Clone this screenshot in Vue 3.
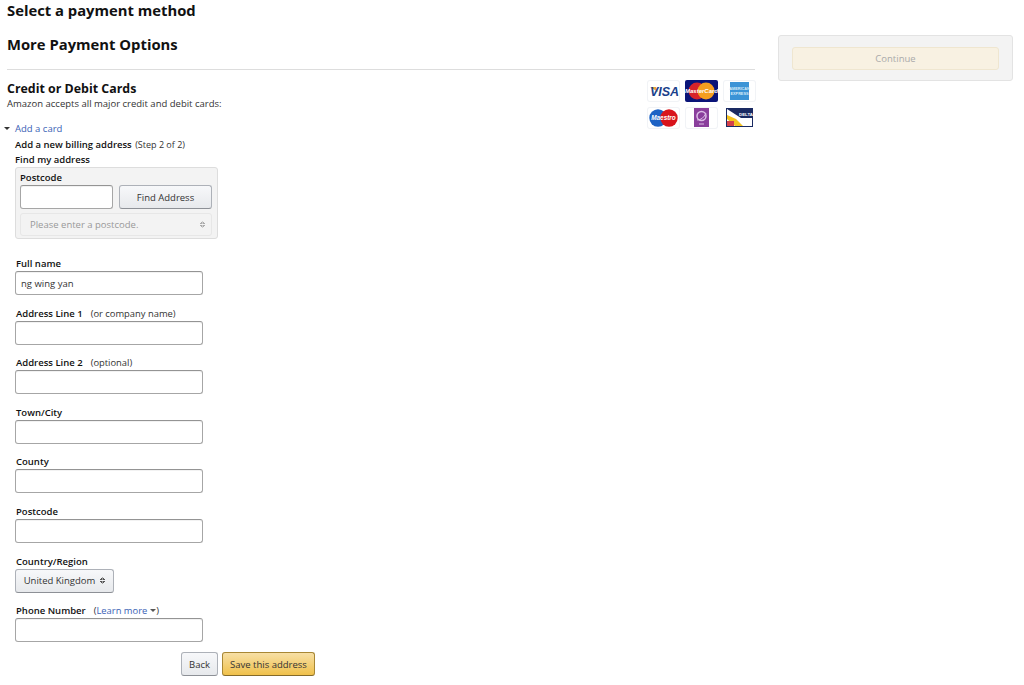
<script setup>
const fields = [
  { label: 'Address Line 1', note: '(or company name)' },
  { label: 'Address Line 2', note: '(optional)' },
  { label: 'Town/City' },
  { label: 'County' },
  { label: 'Postcode' }
]
</script>

<template>
  <div class="page">
    <main class="main">
      <h1 class="title">Select a payment method</h1>
      <h2 class="subtitle">More Payment Options</h2>
      <hr class="rule" />
      <section class="cards">
        <div class="cards-text">
          <h3 class="cards-title">Credit or Debit Cards</h3>
          <p class="cards-note">Amazon accepts all major credit and debit cards:</p>
        </div>
        <div class="logos">
          <div class="logo">
            <svg viewBox="0 0 33 22" width="33" height="22">
              <path d="M3 7 L9 7 L11 12 Z" fill="#e8a33d" />
              <text x="17.5" y="16" text-anchor="middle" font-size="12.5" font-weight="700" font-style="italic" fill="#1a3f8b" font-family="Liberation Sans">VISA</text>
            </svg>
          </div>
          <div class="logo mc">
            <svg viewBox="0 0 33 22" width="33" height="22">
              <rect width="33" height="22" rx="2" fill="#0a1478" />
              <circle cx="12" cy="11" r="8.5" fill="#d8232a" />
              <circle cx="21" cy="11" r="8.5" fill="#f59e1f" />
              <text x="16.5" y="13" text-anchor="middle" font-size="6" font-weight="700" font-style="italic" fill="#fff" font-family="Liberation Sans">MasterCard</text>
            </svg>
          </div>
          <div class="logo">
            <svg viewBox="0 0 33 22" width="33" height="22">
              <rect x="7" y="2" width="19" height="18" fill="#3b93d6" />
              <text x="16.5" y="10" text-anchor="middle" font-size="3.8" font-weight="700" fill="#d7ebf8" font-family="Liberation Sans">AMERICAN</text>
              <text x="16.5" y="15" text-anchor="middle" font-size="3.8" font-weight="700" fill="#d7ebf8" font-family="Liberation Sans">EXPRESS</text>
            </svg>
          </div>
          <div class="logo">
            <svg viewBox="0 0 33 22" width="33" height="22">
              <circle cx="11" cy="11" r="8.7" fill="#1d62c4" />
              <circle cx="22" cy="11" r="8.7" fill="#d8141c" />
              <text x="16.5" y="13" text-anchor="middle" font-size="6.4" font-weight="700" font-style="italic" fill="#fff" font-family="Liberation Sans">Maestro</text>
            </svg>
          </div>
          <div class="logo">
            <svg viewBox="0 0 33 22" width="33" height="22">
              <rect x="9" y="1" width="15" height="19" fill="#8a3f9c" />
              <circle cx="16.5" cy="9" r="4.5" fill="none" stroke="#dcbde6" stroke-width="1.5" />
              <path d="M12 13 Q18 13 21 6 M14 17 H19" fill="none" stroke="#dcbde6" stroke-width="1" />
            </svg>
          </div>
          <div class="logo plain">
            <svg viewBox="0 0 33 22" width="33" height="22">
              <rect x="3" y="1" width="27" height="19" fill="#fff" />
              <path d="M4 2 L30 2 L30 11 L18 11 Z" fill="#1a2a62" />
              <path d="M4 8 L13 12 L20 19 L12 19 L4 12 Z" fill="#f4c21f" />
              <path d="M4 14 L11 14 L11 19 L4 19 Z" fill="#d4404a" />
              <rect x="3.5" y="1.5" width="26" height="18" fill="none" stroke="#1a2a62" />
              <text x="23" y="8.5" text-anchor="middle" font-size="4.4" font-weight="700" fill="#fff" font-family="Liberation Sans">DELTA</text>
            </svg>
          </div>
        </div>
      </section>

      <div class="add-card">
        <span class="caret"></span>
        <a class="link">Add a card</a>
      </div>

      <div class="form">
        <div class="step"><b>Add a new billing address</b> <span class="step-note">(Step 2 of 2)</span></div>
        <div class="find-label">Find my address</div>
        <div class="find-box">
          <div class="find-postcode">Postcode</div>
          <div class="find-row">
            <input class="input find-input" type="text" />
            <button class="btn find-btn" type="button">Find Address</button>
          </div>
          <div class="find-select">
            <span>Please enter a postcode.</span>
            <span class="updown dim"></span>
          </div>
        </div>

        <div class="field first">
          <label class="label">Full name</label>
          <input class="input" type="text" value="ng wing yan" />
        </div>
        <div v-for="f in fields" :key="f.label" class="field">
          <label class="label">{{ f.label }}<span v-if="f.note" class="note">{{ f.note }}</span></label>
          <input class="input" type="text" />
        </div>
        <div class="field">
          <label class="label">Country/Region</label>
          <button class="btn country" type="button">United Kingdom<span class="updown"></span></button>
        </div>
        <div class="field">
          <label class="label">Phone Number<span class="note">(<a class="link">Learn more</a><span class="mini-caret"></span>)</span></label>
          <input class="input" type="text" />
        </div>
        <div class="actions">
          <button class="btn back" type="button">Back</button>
          <button class="btn save" type="button">Save this address</button>
        </div>
      </div>
    </main>

    <aside class="side">
      <div class="continue">Continue</div>
    </aside>
  </div>
</template>

<style>
html, body { margin: 0; background: #fff; }
</style>

<style scoped>
.page {
  display: flex;
  align-items: flex-start;
  width: 1024px;
  height: 685px;
  overflow: hidden;
  font-family: "Open Sans", "Liberation Sans", sans-serif;
  color: #111;
  font-size: 9.5px;
  box-sizing: border-box;
}
.main { width: 748px; margin-left: 7px; flex: none; }
.title { margin: 0; font-size: 14.8px; line-height: 20px; font-weight: 700; }
.subtitle { margin: 14px 0 0; font-size: 14.8px; line-height: 20px; font-weight: 700; }
.rule { margin: 15px 0 0; border: 0; border-top: 1px solid #ddd; }
.cards { display: flex; justify-content: space-between; padding-top: 10px; }
.cards-text { padding-top: 1px; }
.cards-title { margin: 0; font-size: 12.4px; line-height: 16px; font-weight: 700; }
.cards-note { margin: 0; font-size: 9.5px; line-height: 14px; color: #333; }
.logos { display: grid; grid-template-columns: repeat(3, 33px); gap: 5px; margin-right: -1px; }
.logo { width: 33px; height: 22px; border-radius: 3px; box-shadow: 0 0 0 1px #f1f3f6 inset; }
.logo.mc { box-shadow: none; }
.logo.plain { box-shadow: none; }
.logo svg { display: block; }
.add-card { display: flex; align-items: center; margin-top: -8px; height: 14px; }
.caret { width: 0; height: 0; border: 3px solid transparent; border-top: 3px solid #333; border-bottom: 0; margin-left: -3px; margin-right: 5px; }
.link { color: #3a62b5; }
.form { margin-left: 8px; }
.step { margin-top: 3px; line-height: 14px; }
.step b { font-weight: 600; }
.step-note { font-weight: 400; color: #333; font-size: 9px; margin-left: 1px; }
.find-label { font-weight: 600; line-height: 15px; }
.find-box {
  width: 203px; height: 72px; margin-top: 0; box-sizing: border-box;
  padding: 3px 4px 0; background: #f3f3f3; border: 1px solid #ddd; border-radius: 3px;
}
.find-postcode { font-weight: 600; line-height: 14px; }
.find-row { display: flex; gap: 6px; }
.input {
  display: block; box-sizing: border-box; width: 188px; height: 24px; padding: 0 5px;
  background: #fff; border: 1px solid #a6a6a6; border-top-color: #949494; border-radius: 3px;
  box-shadow: 0 1px 0 rgba(0,0,0,.05) inset; font: inherit; color: #333; outline: none;
}
.find-input { width: 93px; }
.btn {
  box-sizing: border-box; font: inherit; color: #111; border: 1px solid #adb1b8; border-bottom-color: #8d9096; border-radius: 3px;
  background: linear-gradient(#f7f8fa, #e7e9ec); padding: 0; cursor: pointer;
}
.find-btn { width: 93px; height: 24px; color: #333; }
.find-select {
  display: flex; align-items: center; justify-content: space-between; box-sizing: border-box;
  width: 192px; height: 23px; margin-top: 4px; padding: 0 6px 0 9px; background: #f3f3f3;
  border: 1px solid #e7e7e7; border-radius: 3px; color: #999;
}
.updown { display: inline-block; width: 5px; height: 7px; margin-left: 5px; background:
  linear-gradient(135deg, transparent 50%, #555 50%) 0 0 / 2.5px 3px no-repeat,
  linear-gradient(225deg, transparent 50%, #555 50%) 2.5px 0 / 2.5px 3px no-repeat,
  linear-gradient(45deg, transparent 50%, #555 50%) 0 4px / 2.5px 3px no-repeat,
  linear-gradient(315deg, transparent 50%, #555 50%) 2.5px 4px / 2.5px 3px no-repeat; }
.updown.dim { opacity: .45; }
.field { margin-top: 10.6px; }
.field.first { margin-top: 17px; }
.label { display: block; margin-left: 1px; height: 15px; line-height: 15px; font-weight: 600; }
.note { font-weight: 400; margin-left: 8px; color: #333; font-size: 9.4px; }
.mini-caret { display: inline-block; width: 0; height: 0; border: 3px solid transparent; border-top: 3px solid #555; border-bottom: 0; margin-left: 3px; vertical-align: 2px; }
.country { display: flex; align-items: center; justify-content: center; width: 99px; height: 24px; color: #333; }
.actions { display: flex; gap: 4px; margin: 10px 0 0 166px; }
.back { width: 37px; height: 24px; color: #333; }
.save { width: 93px; height: 24px; color: #333; background: linear-gradient(#f7dfa5, #f0c14b); border-color: #a88734; border-bottom-color: #846a29; }
.side {
  box-sizing: border-box; flex: none; width: 235px; height: 46px; margin: 35px 0 0 23px; padding: 11px 13px 0;
  background: #f3f3f3; border: 1px solid #e3e3e3; border-radius: 3px;
}
.continue {
  height: 23px; box-sizing: border-box; display: flex; align-items: center; justify-content: center;
  background: #f8f1e2; border: 1px solid #efe6d0; border-radius: 3px; color: #aaa;
}
</style>
